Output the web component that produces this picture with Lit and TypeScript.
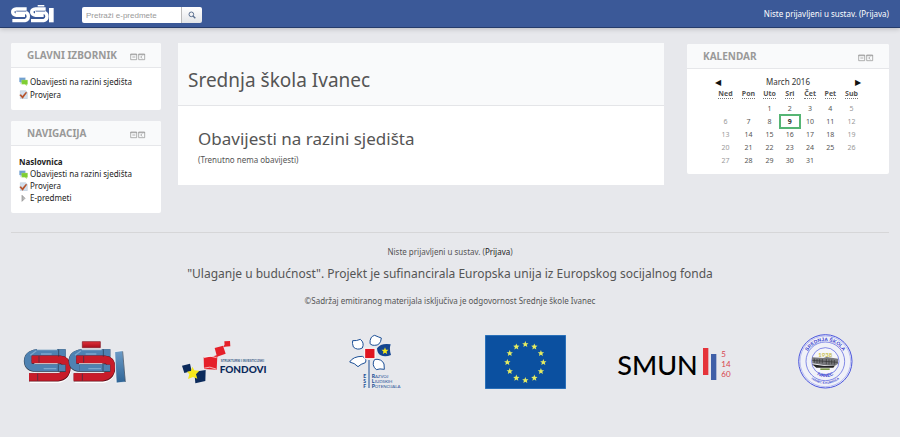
import { LitElement, html, svg, css } from "lit";
import { customElement, property } from "lit/decorators.js";
import { classMap } from "lit/directives/class-map.js";

const forumIcon = html`<svg class="icon" viewBox="0 0 27 27" width="9" height="9" aria-hidden="true">
  <path d="M1 2h18v13H9l-4 5v-5H1z" fill="#6f9fd0" stroke="#a9c6e4" />
  <path d="M8 9h18v13h-3v4l-5-4H8z" fill="#7fce32" stroke="#b9e58c" />
</svg>`;

const quizIcon = html`<svg class="icon" viewBox="0 0 27 27" width="9" height="9" aria-hidden="true">
  <path d="M4 2h16l5 5v19H4z" fill="#d3e0ee" stroke="#9db2c8" />
  <path d="M1 15l5-2 4 5L21 5l3 3-13 18z" fill="#b5532c" />
</svg>`;

const expandIcon = html`<svg class="icon" viewBox="0 0 27 27" width="9" height="9" aria-hidden="true">
  <path d="M9 4l9 9-9 9z" fill="#bbb" stroke="#888" stroke-width="2" />
</svg>`;

@customElement("block-panel")
export class BlockPanel extends LitElement {
  @property() heading = "";

  static styles = css`
    :host {
      display: block;
      background: #fff;
      border-radius: 2px;
    }
    .head {
      display: flex;
      align-items: center;
      height: 24px;
      padding: 0 15px 0 16px;
      background: #f9fafb;
      border-bottom: 1px solid #e6e7ea;
      border-radius: 2px 2px 0 0;
    }
    h2 {
      flex: 1;
      margin: 0;
      font-size: 10px;
      line-height: 12px;
      font-weight: 700;
      color: #999;
    }
    button {
      display: block;
      width: 8px;
      height: 8px;
      margin: 3px 0 0;
      padding: 0;
      border: 0;
      background: none;
    }
    svg {
      display: block;
    }
  `;

  render() {
    return html`
      <div class="head">
        <h2>${this.heading}</h2>
        <button type="button" aria-label="Sakrij blok">
          <svg viewBox="0 0 24 24" width="8" height="8" fill="none" stroke="#8c8c8c" stroke-width="2">
            <path d="M2 3h18v17H2zM2 5h18M7 12h9" />
          </svg>
        </button>
        <button type="button" aria-label="Usidri blok">
          <svg viewBox="0 0 24 24" width="8" height="8" fill="none" stroke="#8c8c8c" stroke-width="2">
            <path d="M2 3h18v17H2zM2 5h18M13 8l-5 4 5 4" />
          </svg>
        </button>
      </div>
      <slot></slot>
    `;
  }
}

@customElement("month-calendar")
export class MonthCalendar extends LitElement {
  @property({ type: Number }) today = 9;

  private days = ["Ned", "Pon", "Uto", "Sri", "Čet", "Pet", "Sub"];
  private offset = 2;
  private length = 31;

  static styles = css`
    :host {
      display: block;
      padding: 7px 0;
    }
    nav {
      display: flex;
      justify-content: space-between;
      align-items: center;
      width: 149px;
      margin: 0 auto;
      font-size: 8px;
      line-height: 12px;
      color: #333;
    }
    nav a {
      width: 9px;
      color: #111;
      text-decoration: none;
      text-align: center;
    }
    table {
      width: 149px;
      margin: 0 auto;
      border-collapse: collapse;
      table-layout: fixed;
      text-align: center;
      font-size: 7px;
      line-height: 12px;
      color: #555;
    }
    .wide {
      width: 24px;
    }
    .mid {
      width: 22px;
    }
    th,
    td {
      padding: 0;
      height: 13px;
    }
    th {
      height: 14px;
      vertical-align: top;
    }
    th abbr {
      text-decoration: none;
      border-bottom: 1px dotted #777;
      display: inline-block;
      line-height: 8px;
    }
    .weekend {
      color: #999;
    }
    .today {
      outline: 2px solid #56b574;
      outline-offset: -1px;
      font-weight: 700;
      color: #333;
    }
  `;

  render() {
    const weeks: (number | null)[][] = [];
    for (let start = 1 - this.offset; start <= this.length; start += 7) {
      weeks.push(this.days.map((_, i) => (start + i >= 1 && start + i <= this.length ? start + i : null)));
    }
    return html`
      <nav><a href="#" aria-label="Prethodni mjesec">◀</a><span>March 2016</span><a href="#" aria-label="Sljedeći mjesec">▶</a></nav>
      <table>
        <colgroup>
          <col class="wide" /><col class="mid" /><col /><col /><col /><col /><col class="mid" />
        </colgroup>
        <thead>
          <tr>${this.days.map((d) => html`<th scope="col"><abbr>${d}</abbr></th>`)}</tr>
        </thead>
        <tbody>
          ${weeks.map(
            (week) => html`<tr>
              ${week.map(
                (d, i) =>
                  html`<td class=${classMap({ weekend: i === 0 || i === 6, today: d === this.today })}>${d ?? ""}</td>`
              )}
            </tr>`
          )}
        </tbody>
      </table>
    `;
  }
}

const star = (cx: number, cy: number, r: number) => {
  const pts = Array.from({ length: 10 }, (_, i) => {
    const a = (Math.PI / 5) * i - Math.PI / 2;
    const d = i % 2 ? r * 0.45 : r;
    return `${(cx + d * Math.cos(a)).toFixed(1)},${(cy + d * Math.sin(a)).toFixed(1)}`;
  });
  return svg`<polygon points=${pts.join(" ")} />`;
};

@customElement("partner-logos")
export class PartnerLogos extends LitElement {
  static styles = css`
    :host {
      display: grid;
      grid-template-columns: repeat(6, 1fr);
      align-items: center;
      justify-items: center;
    }
    a,
    svg {
      display: block;
    }
    text {
      font-family: Lato, sans-serif;
    }
    .arc {
      font-family: "Liberation Sans", sans-serif;
    }
  `;

  private school() {
    return html`<svg viewBox="38 42 312 132" width="104" height="44" role="img" aria-label="SŠI">
      <defs>
        <linearGradient id="blue" x1="0" y1="0" x2="0" y2="1">
          <stop offset="0" stop-color="#6c9cc8" /><stop offset="1" stop-color="#2f6496" />
        </linearGradient>
        <linearGradient id="red" x1="0" y1="0" x2="0" y2="1">
          <stop offset="0" stop-color="#e0303a" /><stop offset="1" stop-color="#a80e1c" />
        </linearGradient>
      </defs>
      <g fill="none" stroke-width="22">
        <g id="pair">
          <path d="M64 99H148Q169 101 169 122Q167 150 142 155H56" stroke="#fff" transform="translate(3 5)" />
          <path d="M166 82H80Q53 86 53 106Q54 126 82 126H164" stroke="#333f50" stroke-width="25" />
          <path d="M166 81H80Q53 85 53 105Q54 125 82 125H164" stroke="#4f82b2" />
          <path d="M64 101H148Q169 103 169 124Q167 151 142 154H56" stroke="#60101c" stroke-width="25" />
          <path d="M64 100H148Q169 102 169 123Q167 150 142 153H56" stroke="#c81c2a" />
          <path d="M74 127H166" stroke="#333f50" stroke-width="22" />
          <path d="M74 126H165" stroke="#4f82b2" stroke-width="19" />
          <path d="M72 113H142M70 139H148M80 71H140" stroke="#fff" stroke-width="3" opacity=".75" />
          <path d="M145 70V92M86 90V110M144 116V136M82 143V164" stroke="#26364c" stroke-width="2" />
          <path d="M60 88L78 74M92 84H124M100 128H138" stroke="#9bc0e0" stroke-width="4" opacity=".6" />
        </g>
        <use href="#pair" x="134" />
      </g>
      <path d="M216 47h54v18h-54z" fill="url(#red)" stroke="#811420" stroke-width="2" />
      <path d="M313 77l24-3 9 94-28 3z" fill="url(#blue)" stroke="#fff" stroke-width="2" />
      <path d="M337 76l8 92" stroke="#26364c" stroke-width="2" />
    </svg>`;
  }

  private funds() {
    return html`<svg viewBox="38 42 261 132" width="87" height="44" role="img" aria-label="Strukturni i investicijski fondovi">
      <g fill="#e5202a">
        <path d="M165 46l17-1 1 16-17 1zM136 66l25-7 8 24-26 9zM103 94l41-3-2 40-38-2z" />
      </g>
      <path d="M135 92l10-3M163 62l5-4" stroke="#e5202a" stroke-width="4" />
      <path d="M104 95q18-9 38 0M102 127q20-8 38 2" fill="none" stroke="#fff" stroke-width="2" />
      <path d="M38 119l24-6 5 22-22 6zM75 137l34-5-1 33-30 7z" fill="#0b2a5b" />
      <path d="M69 122l6 11 15 1-10 11 4 13-13-5-15 6 4-14-7-8 12-2z" fill="#f5e81c" />
      <text x="154" y="107" font-size="9" font-weight="700" fill="#3a5c86" class="arc">STRUKTURNI I INVESTICIJSKI</text>
      <text x="151" y="141" font-size="30" font-weight="900" fill="#0b2a5b">FONDOVI</text>
    </svg>`;
  }

  private esf() {
    return html`<svg viewBox="39 27 165 165" width="55" height="55" role="img" aria-label="ESF Razvoj ljudskih potencijala">
      <g fill="#fff" stroke="#1c4f96" stroke-width="3" stroke-linejoin="round">
        <path d="M105 56Q104 34 119 31Q130 36 139 39Q137 62 118 61Q111 62 105 56z" />
        <path d="M82 69Q67 77 55 66Q51 54 53 47Q65 48 76 43Q89 53 82 69z" />
        <path d="M82 94Q97 102 91 113Q77 117 69 125Q59 114 44 111Q54 94 82 94z" />
        <path d="M119 103Q141 101 147 117L148 133Q134 130 124 134Q108 120 119 103z" />
      </g>
      <path d="M126 70Q138 53 167 58Q162 72 168 90Q151 97 137 91Q127 86 126 70z" fill="#14458f" />
      <g fill="#f5e81c">${star(150, 78, 11)}</g>
      <path d="M89 70h31v31H89z" fill="#e0141f" stroke="#fff" stroke-width="3" />
      <path d="M102 105V189" stroke="#1c4f96" stroke-width="3" />
      <g font-size="15" fill="#1c4f96">
        <g font-weight="900">
          <text x="85" y="158">E</text><text x="85" y="173">S</text><text x="85" y="188">F</text>
        </g>
        <text x="110" y="158"><tspan font-weight="900">R</tspan><tspan font-size="13">AZVOJ</tspan></text>
        <text x="110" y="173"><tspan font-weight="900">L</tspan><tspan font-size="13">JUDSKIH</tspan></text>
        <text x="110" y="188"><tspan font-weight="900">P</tspan><tspan font-size="13">OTENCIJALA</tspan></text>
      </g>
    </svg>`;
  }

  private union() {
    const stars = Array.from({ length: 12 }, (_, i) => {
      const a = (Math.PI / 6) * i;
      return star(150 + 54 * Math.sin(a), 109 - 54 * Math.cos(a), 10);
    });
    return html`<svg viewBox="29 27 243 162" width="81" height="54" role="img" aria-label="Europska unija">
      <path d="M29 27h243v162H29z" fill="#0b50a0" stroke="#4a8fd0" stroke-width="3" />
      <g fill="#e6ec60">${stars}</g>
    </svg>`;
  }

  private smun() {
    return html`<svg viewBox="36 51 351 117" width="117" height="39" role="img" aria-label="SMUN 5 14 60">
      <text x="37" y="149" font-size="81" font-weight="500" fill="#000">SMUN</text>
      <path d="M294 69h16v81h-16z" fill="#e5333a" />
      <path d="M318 87h16v78h-16z" fill="#3f5fa8" />
      <g font-size="24" fill="#d8444c">
        <text x="349" y="97">5</text><text x="349" y="126">14</text><text x="349" y="155">60</text>
      </g>
    </svg>`;
  }

  private seal() {
    return html`<svg viewBox="41 27 165 165" width="55" height="55" role="img" aria-label="Srednja škola Ivanec">
      <defs>
        <path id="upper" d="M61 112a62 64 0 0 1 124 0" />
        <path id="lower" d="M54 118a70 70 0 0 0 138 0" />
        <path id="town" d="M78 128a50 50 0 0 0 90 0" />
      </defs>
      <g fill="none" stroke="#4a55dd">
        <circle cx="123" cy="109" r="80" fill="#f0f1f8" stroke-width="3" />
        <circle cx="123" cy="109" r="76" stroke-width="1" />
        <circle cx="123" cy="109" r="58" stroke-width="2" />
        <circle cx="123" cy="109" r="41" stroke-width="2" fill="#f6f6fa" />
      </g>
      <text x="123" y="96" font-size="18" text-anchor="middle" fill="#c9bf4e" font-weight="700">1938</text>
      <path d="M83 97l34 2 10-3 34 5v15l-10 7-30-2-37-6z" fill="#77787c" />
      <path d="M84 106l76 6M90 101v12M98 102v12M106 102v12M114 102v13M126 102v16M134 103v16M142 104v14M150 105v14" stroke="#333" stroke-width="2" />
      <path d="M83 118l38 5 30 0-4 5H96z" fill="#222" />
      <path d="M108 130h28v5h-28z" fill="#7f9a4a" />
      <g class="arc" fill="#3a45cf" font-weight="700" text-anchor="middle">
        <text class="arc" font-size="15"><textPath href="#upper" startOffset="50%">SREDNJA ŠKOLA</textPath></text>
        <text class="arc" font-size="14"><textPath href="#town" startOffset="50%">IVANEC</textPath></text>
        <text class="arc" font-size="9"><textPath href="#lower" startOffset="50%">IVANEC E.KUMIČIĆA</textPath></text>
      </g>
    </svg>`;
  }

  render() {
    return [this.school(), this.funds(), this.esf(), this.union(), this.smun(), this.seal()].map(
      (logo) => html`<a href="#">${logo}</a>`
    );
  }
}

@customElement("app-root")
export class AppRoot extends LitElement {
  static styles = css`
    :host {
      display: block;
      min-height: 100vh;
      background: #e7e8ec;
      color: #555;
      font-family: "Noto Sans", sans-serif;
      font-size: 8px;
      line-height: 12px;
    }
    a {
      color: #222;
      text-decoration: none;
    }
    .bar {
      display: flex;
      align-items: center;
      height: 27px;
      padding: 0 11px;
      background: #3b5998;
      border-bottom: 1px solid #263c6b;
      box-shadow: 0 1px 5px rgba(0, 0, 0, 0.2);
      color: #fff;
    }
    .bar a {
      color: #fff;
    }
    .brand svg {
      display: block;
    }
    form {
      display: flex;
      flex: 1;
      margin: 3px 0 0 27px;
    }
    input {
      box-sizing: border-box;
      width: 99px;
      height: 16px;
      padding: 0 4px;
      border: 0;
      border-radius: 2px 0 0 2px;
      background: #fff;
      font: 8px/12px "Liberation Sans", sans-serif;
      color: #444;
    }
    input::placeholder {
      color: #999;
    }
    form button {
      display: grid;
      place-items: center;
      width: 21px;
      height: 16px;
      padding: 0;
      border: 0;
      border-left: 1px solid #bbb;
      border-radius: 0 2px 2px 0;
      background: linear-gradient(#fff, #e3e5e8);
    }
    .page {
      display: grid;
      grid-template-columns: 150fr 486fr 208fr;
      gap: 17px;
      align-items: start;
      padding: 15px 11px 0;
    }
    .side {
      display: grid;
      gap: 11px;
    }
    .right {
      padding: 1px 0 0 6px;
    }
    ul {
      margin: 0;
      padding: 7px 8px 9px;
      list-style: none;
    }
    li a {
      display: flex;
      align-items: center;
      gap: 2px;
      line-height: 13px;
    }
    .tree {
      padding: 10px 8px 9px;
    }
    .tree a {
      line-height: 12px;
    }
    .root a {
      font-weight: 700;
    }
    main {
      background: #fff;
    }
    h1 {
      margin: 0;
      padding: 25px 10px 13px;
      border-bottom: 1px solid #e4e5e8;
      background: #f9fafb;
      font-size: 19px;
      line-height: 24px;
      font-weight: 400;
    }
    .news {
      padding: 21px 20px 19px;
    }
    .news h2 {
      margin: 0 0 3px;
      font-size: 17px;
      line-height: 24px;
      font-weight: 400;
    }
    p {
      margin: 0;
    }
    footer {
      margin: 19px 11px 0;
      padding-top: 13px;
      border-top: 1px solid #d6d6d8;
      text-align: center;
    }
    footer .motto {
      padding: 8px 0 13px;
      font-size: 12px;
      line-height: 16px;
    }
    partner-logos {
      margin-top: 27px;
    }
  `;

  private item(icon: unknown, label: string) {
    return html`<li><a href="#">${icon}<span>${label}</span></a></li>`;
  }

  render() {
    return html`
      <header class="bar">
        <a class="brand" href="#" aria-label="SŠI">
          <svg viewBox="0 0 132 54" width="44" height="18" fill="none" stroke="#fff">
            <g stroke-width="10">
              <path d="M47 12H16Q5 13 5 21T16 31H42" />
              <path d="M14 22H42Q52 23 52 34T42 47H4" />
              <path d="M104 12H74Q62 13 62 21T74 31H98" />
              <path d="M72 22H98Q108 23 108 34T98 47H60" />
              <path d="M80 2H100" stroke-width="5" />
              <path d="M121 9V52" stroke-width="14" />
            </g>
            <path d="M16 19H46M10 39H42M74 19H102M68 39H98" stroke="#3b5998" stroke-width="2" />
          </svg>
        </a>
        <form role="search">
          <input type="text" placeholder="Pretraži e-predmete" aria-label="Pretraži e-predmete" />
          <button type="button" aria-label="Traži">
            <svg viewBox="0 0 24 24" width="8" height="8" fill="none" stroke="#5a7090" stroke-width="3">
              <circle cx="10" cy="10" r="7" />
              <path d="M15 15l7 7" stroke-width="4" />
            </svg>
          </button>
        </form>
        <span>Niste prijavljeni u sustav. (<a href="#">Prijava</a>)</span>
      </header>
      <div class="page">
        <div class="side">
          <block-panel heading="GLAVNI IZBORNIK">
            <ul>
              ${this.item(forumIcon, "Obavijesti na razini sjedišta")} ${this.item(quizIcon, "Provjera")}
            </ul>
          </block-panel>
          <block-panel heading="NAVIGACIJA">
            <ul class="tree">
              <li class="root"><a href="#">Naslovnica</a></li>
              ${this.item(forumIcon, "Obavijesti na razini sjedišta")} ${this.item(quizIcon, "Provjera")}
              ${this.item(expandIcon, "E-predmeti")}
            </ul>
          </block-panel>
        </div>
        <main>
          <h1>Srednja škola Ivanec</h1>
          <section class="news">
            <h2>Obavijesti na razini sjedišta</h2>
            <p>(Trenutno nema obavijesti)</p>
          </section>
        </main>
        <aside class="right">
          <block-panel heading="KALENDAR">
            <month-calendar></month-calendar>
          </block-panel>
        </aside>
      </div>
      <footer>
        <p>Niste prijavljeni u sustav. (<a href="#">Prijava</a>)</p>
        <p class="motto">"Ulaganje u budućnost". Projekt je sufinancirala Europska unija iz Europskog socijalnog fonda</p>
        <p>©Sadržaj emitiranog materijala isključiva je odgovornost Srednje škole Ivanec</p>
      </footer>
      <partner-logos></partner-logos>
    `;
  }
}
